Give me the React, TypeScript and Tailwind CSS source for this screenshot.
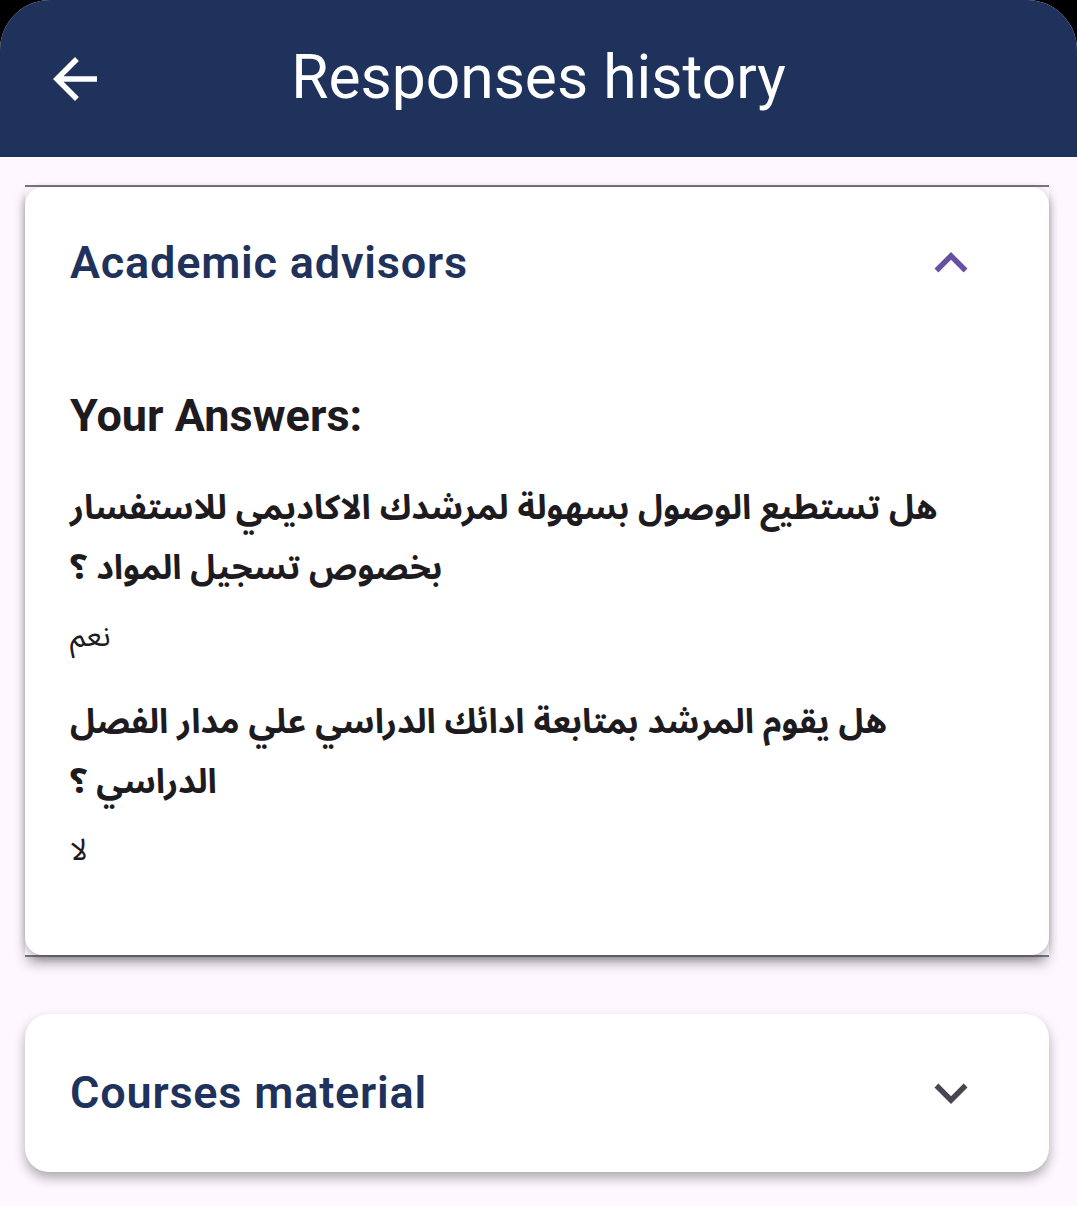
/* ---------------- DATA ---------------- */
const answers = [
  {
    q: "هل تستطيع الوصول بسهولة لمرشدك الاكاديمي للاستفسار بخصوص تسجيل المواد ؟",
    a: "نعم",
    gap: "mt-[37px]",
  },
  {
    q: "هل يقوم المرشد بمتابعة ادائك الدراسي علي مدار الفصل الدراسي ؟",
    a: "لا",
    gap: "mt-[31px]",
  },
];

const arabicFont = "font-['Noto_Sans_Arabic','DejaVu_Sans',Roboto,sans-serif]";

function ChevronUp() {
  return (
    <svg viewBox="0 0 24 24" className="h-[66px] w-[66px] fill-[#6750a4]">
      <path d="M12 8l-6 6 1.41 1.41L12 10.83l4.59 4.58L18 14z" />
    </svg>
  );
}

function ChevronDown() {
  return (
    <svg viewBox="0 0 24 24" className="h-[66px] w-[66px] fill-[#49454f]">
      <path d="M16.59 8.59L12 13.17 7.41 8.59 6 10l6 6 6-6z" />
    </svg>
  );
}

function BackArrow() {
  return (
    <svg viewBox="0 0 24 24" className="h-[66px] w-[66px] fill-white">
      <path d="M20 11H7.83l5.59-5.59L12 4l-8 8 8 8 1.41-1.41L7.83 13H20v-2z" />
    </svg>
  );
}

export default function App() {
  return (
    <div className="min-h-[1206px] w-full bg-black font-['Roboto',sans-serif]">
      <div className="min-h-[1206px] overflow-hidden rounded-t-[50px] bg-[#fef7ff]">
        {/* HEADER */}
        <header className="relative flex h-[157px] items-center bg-[#1e325c] pl-[42px]">
          <BackArrow />
          <h1 className="absolute left-0 right-0 text-center text-[60.5px] leading-none font-normal text-white">
            Responses history
          </h1>
        </header>

        <div className="flex flex-col gap-[57px] pl-[25px] pr-[28px] pt-[28px] pb-[35px]">
          {/* EXPANDED CARD */}
          <section className="border-y-[2px] border-[#79747e] shadow-[0_8px_12px_-2px_rgba(0,0,0,0.3)]">
            <div className="rounded-[18px] bg-white shadow-[0_3px_8px_rgba(0,0,0,0.3)]">
              <div className="flex h-[152px] items-center justify-between pl-[45px] pr-[65px]">
                <h2 className="text-[45px] font-semibold tracking-[0.8px] text-[#1e325c]">
                  Academic advisors
                </h2>
                <ChevronUp />
              </div>

              <div className="px-[45px] pt-[52px] pb-[80px]">
                <h3 className="text-[45px] leading-[50px] font-bold text-[#1d1b20]">
                  Your Answers:
                </h3>
                {answers.map((item, i) => (
                  <div key={i} className={item.gap}>
                    <p className={`${arabicFont} max-w-[880px] text-[34px] leading-[60px] font-bold text-[#1d1b20]`}>
                      {item.q}
                    </p>
                    <p className={`${arabicFont} mt-[15px] text-[30px] leading-[48px] text-[#1d1b20]`}>
                      {item.a}
                    </p>
                  </div>
                ))}
              </div>
            </div>
          </section>

          {/* COLLAPSED CARD */}
          <section className="flex h-[158px] items-center justify-between rounded-[24px] bg-white pl-[45px] pr-[65px] shadow-[0_6px_12px_rgba(0,0,0,0.32)]">
            <h2 className="text-[45px] font-semibold tracking-[0.8px] text-[#1e325c]">
              Courses material
            </h2>
            <ChevronDown />
          </section>
        </div>
      </div>
    </div>
  );
}
